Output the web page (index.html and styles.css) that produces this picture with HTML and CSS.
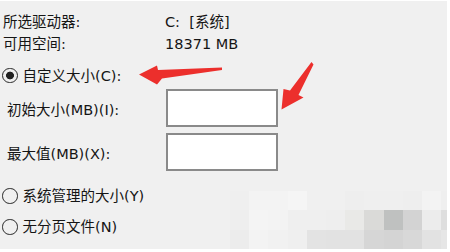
FILE: index.html
```html
<!DOCTYPE html>
<html lang="zh-CN">
<head>
<meta charset="utf-8">
<title>虚拟内存</title>
<link rel="stylesheet" href="styles.css">
</head>
<body>
<div class="panel">
  <div class="info">
    <div class="info-row"><span class="lbl">所选驱动器:</span><span class="val">C:&nbsp; [系统]</span></div>
    <div class="info-row"><span class="lbl">可用空间:</span><span class="val">18371 MB</span></div>
  </div>
  <div class="radio-row first"><span class="radio checked"></span><span class="rtext">自定义大小(C):</span></div>
  <div class="fields">
    <span class="flabel">初始大小(MB)(I):</span><span class="box"></span>
    <span class="flabel">最大值(MB)(X):</span><span class="box"></span>
  </div>
  <div class="radio-row second"><span class="radio"></span><span class="rtext">系统管理的大小(Y)</span></div>
  <div class="radio-row third"><span class="radio"></span><span class="rtext">无分页文件(N)</span></div>
</div>
<svg class="arrows" width="450" height="252" viewBox="0 0 450 252">
  <polygon points="139,74.5 157,65.5 158,70 222,67.5 222,70 162,78.5 157,84.5" fill="#ec2f2c"/>
  <polygon points="281.5,109.5 283.5,89 290,90.5 311.5,62 313.5,64.5 298.5,95 303.5,97.5" fill="#ec2f2c"/>
</svg>
<div class="mosaic">
  <i style="background:#efefef"></i><i style="background:#f3f3f3"></i><i style="background:#f3f3f3"></i><i style="background:#f5f5f5"></i><i style="background:#f0f0f0"></i><i style="background:#f0f0f0"></i><i style="background:#eeeeee"></i><i style="background:#efefef"></i><i style="background:#efefef"></i><i style="background:#eeeeee"></i><i style="background:#f3f3f3"></i><i style="background:#efefef"></i>
  <i style="background:#eeeeee"></i><i style="background:#f4f4f4"></i><i style="background:#f3f3f3"></i><i style="background:#efefef"></i><i style="background:#efefef"></i><i style="background:#eeeeee"></i><i style="background:#e9e9e7"></i><i style="background:#dadad8"></i><i style="background:#bfc1c0"></i><i style="background:#d3d3d3"></i><i style="background:#ececec"></i><i style="background:#dedede"></i>
  <i style="background:#ececec"></i><i style="background:#f3f3f3"></i><i style="background:#f1f1f1"></i><i style="background:#efefef"></i><i style="background:#e3e3e3"></i><i style="background:#e2e2e2"></i><i style="background:#e2e2e2"></i><i style="background:#d6d6d6"></i><i style="background:#d4d4d4"></i><i style="background:#d8d8d8"></i><i style="background:#e2e2e2"></i><i style="background:#e6e6e6"></i>
</div>
</body>
</html>
```
FILE: styles.css
```css
html, body {
  margin: 0;
  padding: 0;
  background: #ffffff;
}
body {
  position: relative;
  width: 450px;
  height: 252px;
  overflow: hidden;
  font-family: "DejaVu Sans", "Noto Sans CJK SC", sans-serif;
  font-size: 14.5px;
  color: #151515;
}
.panel {
  box-sizing: border-box;
  margin-top: 1px;
  width: 447px;
  height: 248px;
  background: #f0f0f0;
  padding-top: 9.5px;
  display: flex;
  flex-direction: column;
}
.info-row {
  display: flex;
  height: 22px;
  line-height: 22px;
}
.lbl {
  box-sizing: border-box;
  width: 165px;
  padding-left: 3px;
}
.radio-row {
  display: flex;
  align-items: center;
  gap: 5px;
  height: 22px;
  line-height: 22px;
  padding-left: 2px;
}
.radio-row.first { margin-top: 10px; }
.radio-row.second { margin-top: 14px; }
.radio-row.third { margin-top: 9px; }
.radio {
  box-sizing: border-box;
  width: 15.5px;
  height: 15.5px;
  border: 1.6px solid #2a2a2a;
  border-radius: 50%;
  flex: none;
}
.radio.checked {
  background: radial-gradient(circle, #222222 0 3.6px, transparent 4.2px);
}
.fields {
  margin-top: 2.5px;
  display: grid;
  grid-template-columns: 159px 112px;
  row-gap: 6px;
  align-items: center;
  padding-left: 7px;
}
.flabel {
  padding-top: 4px;
  line-height: 22px;
}
.box {
  box-sizing: border-box;
  height: 38px;
  background: #ffffff;
  border: 2px solid #8a8a8a;
}
.arrows {
  position: absolute;
  left: 0;
  top: 0;
}
.mosaic {
  position: absolute;
  left: 230px;
  top: 191px;
  display: grid;
  grid-template-columns: repeat(12, 19.2px);
  grid-auto-rows: 19.4px;
  width: 217px;
  overflow: hidden;
}
.mosaic i {
  display: block;
}
```
